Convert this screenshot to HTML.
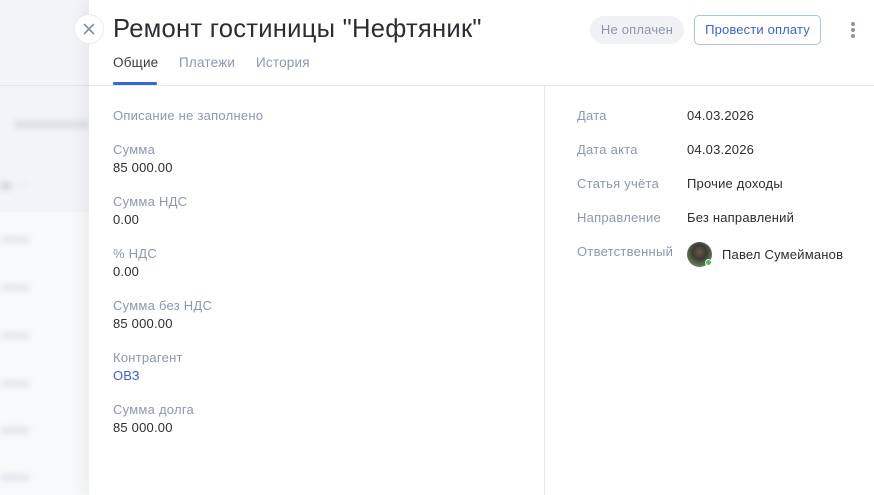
<!DOCTYPE html>
<html><head><meta charset="utf-8"><style>
*{margin:0;padding:0;box-sizing:border-box}
body{width:874px;height:495px;overflow:hidden;background:#f4f5f9;font-family:"Liberation Sans",sans-serif;position:relative}
.bg{position:absolute;left:0;top:0;width:89px;height:495px;background:#f3f4f8}
.bgline{position:absolute;left:0;top:85px;width:89px;height:1px;background:#e4e6ef}
.blur{position:absolute;background:#e4e6ec;filter:blur(3px);border-radius:3px}
.rows{position:absolute;left:0;top:212px;width:89px;height:283px;background:#f8f9fb}
.panel{position:absolute;left:89px;top:0;width:785px;height:495px;background:#fff;box-shadow:-6px 0 14px rgba(0,0,0,.05)}
.close{position:absolute;left:74px;top:14px;width:30px;height:30px;border-radius:50%;background:#fff;border:1px solid #e8eaf0;z-index:5}
h1{position:absolute;left:113px;top:15px;font-size:25.6px;font-weight:normal;color:#2b2d33;letter-spacing:.25px;white-space:nowrap}
.tab{position:absolute;top:55px;font-size:13.5px;color:#8d96b5;letter-spacing:.2px}
.tab.a{color:#3a3c44}
.ul{position:absolute;left:113px;top:82px;width:44px;height:3px;background:#3865e0;border-radius:1px}
.hline{position:absolute;left:89px;top:85px;width:785px;height:1px;background:#e6e8f0}
.vline{position:absolute;left:544px;top:86px;width:1px;height:409px;background:#e6e8f0}
.badge{position:absolute;left:590px;top:16px;width:94px;height:28px;border-radius:14px;background:#f0f1f5;color:#8e96ae;font-size:13px;line-height:28px;text-align:center;letter-spacing:.2px}
.btn{position:absolute;left:694px;top:15px;width:127px;height:30px;border:1px solid #aebff0;border-radius:5px;color:#3a62d9;font-size:13px;line-height:28px;text-align:center;letter-spacing:.15px}
.dot{position:absolute;left:851px;width:4px;height:4px;border-radius:50%;background:#8b93ab}
.l{position:absolute;left:113px;font-size:13px;color:#8d96b5;white-space:nowrap;letter-spacing:.25px}
.v{position:absolute;left:113px;font-size:13px;color:#2b2d33;white-space:nowrap;letter-spacing:.2px}
.rl{position:absolute;left:577px;font-size:13px;color:#8d96b5;white-space:nowrap;letter-spacing:.25px}
.rv{position:absolute;left:687px;font-size:13px;color:#2b2d33;white-space:nowrap;letter-spacing:.2px}
</style></head><body>
<div class="bg"></div>
<div class="blur" style="left:14px;top:120px;width:75px;height:9px;background:#dfe1e8"></div>
<div class="blur" style="left:0;top:182px;width:12px;height:8px;background:#d4d7df"></div>
<div class="blur" style="left:18px;top:184px;width:8px;height:3px"></div>
<div class="rows"></div>
<div class="blur" style="left:0;top:236px;width:30px;height:7px"></div>
<div class="blur" style="left:0;top:284px;width:30px;height:7px"></div>
<div class="blur" style="left:0;top:332px;width:30px;height:7px"></div>
<div class="blur" style="left:0;top:380px;width:30px;height:7px"></div>
<div class="blur" style="left:0;top:427px;width:30px;height:7px"></div>
<div class="blur" style="left:0;top:474px;width:30px;height:7px"></div>
<div class="bgline"></div>
<div class="panel"></div>
<div class="close"><svg width="30" height="30" viewBox="0 0 30 30" style="position:absolute;left:-1px;top:-1px"><path d="M10.5 10.5L19.5 19.5M19.5 10.5L10.5 19.5" stroke="#858ea9" stroke-width="1.6" stroke-linecap="round"/></svg></div>
<h1>Ремонт гостиницы "Нефтяник"</h1>
<div class="tab a" style="left:113px">Общие</div>
<div class="tab" style="left:179px">Платежи</div>
<div class="tab" style="left:256px">История</div>
<div class="ul"></div>
<div class="hline"></div>
<div class="vline"></div>
<div class="badge">Не оплачен</div>
<div class="btn">Провести оплату</div>
<div class="dot" style="top:22px"></div><div class="dot" style="top:28px"></div><div class="dot" style="top:34px"></div>

<div class="l" style="top:108px">Описание не заполнено</div>
<div class="l" style="top:142px">Сумма</div><div class="v" style="top:160px">85 000.00</div>
<div class="l" style="top:194px">Сумма НДС</div><div class="v" style="top:212px">0.00</div>
<div class="l" style="top:246px">% НДС</div><div class="v" style="top:264px">0.00</div>
<div class="l" style="top:298px">Сумма без НДС</div><div class="v" style="top:316px">85 000.00</div>
<div class="l" style="top:350px">Контрагент</div><div class="v" style="top:368px;color:#3a62d9">ОВЗ</div>
<div class="l" style="top:402px">Сумма долга</div><div class="v" style="top:420px">85 000.00</div>

<div class="rl" style="top:108px">Дата</div><div class="rv" style="top:108px">04.03.2026</div>
<div class="rl" style="top:142px">Дата акта</div><div class="rv" style="top:142px">04.03.2026</div>
<div class="rl" style="top:176px">Статья учёта</div><div class="rv" style="top:176px">Прочие доходы</div>
<div class="rl" style="top:210px">Направление</div><div class="rv" style="top:210px">Без направлений</div>
<div class="rl" style="top:244px">Ответственный</div>
<div style="position:absolute;left:687px;top:242px;width:25px;height:25px;border-radius:50%;background:radial-gradient(circle at 50% 40%,#6b5a4a 0,#3c3a33 35%,#5e7a55 70%,#8fa58a 100%)"></div>
<div style="position:absolute;left:705px;top:259px;width:7px;height:7px;border-radius:50%;background:#4cc24a;border:1px solid #fff"></div>
<div class="rv" style="left:722px;top:247px">Павел Сумейманов</div>
</body></html>
